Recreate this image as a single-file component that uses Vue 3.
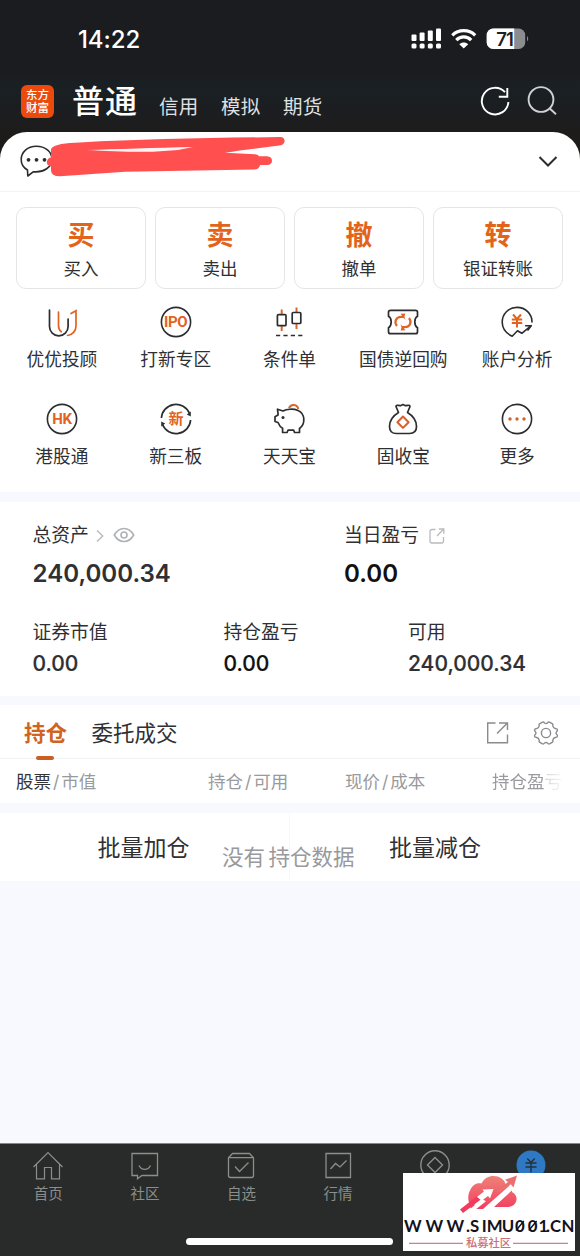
<script setup>
const accounts = ['信用', '模拟', '期货']
const trades = [
  { mark: '买', label: '买入' },
  { mark: '卖', label: '卖出' },
  { mark: '撤', label: '撤单' },
  { mark: '转', label: '银证转账' },
]
const services = [
  { icon: 'advisor', label: '优优投顾' },
  { icon: 'ring', mark: 'IPO', label: '打新专区' },
  { icon: 'candle', label: '条件单' },
  { icon: 'ticket', label: '国债逆回购' },
  { icon: 'analysis', label: '账户分析' },
  { icon: 'ring', mark: 'HK', label: '港股通' },
  { icon: 'newboard', mark: '新', label: '新三板' },
  { icon: 'pig', label: '天天宝' },
  { icon: 'bag', label: '固收宝' },
  { icon: 'more', label: '更多' },
]
const navs = [
  { icon: 'home', label: '首页' },
  { icon: 'community', label: '社区' },
  { icon: 'watch', label: '自选' },
  { icon: 'market', label: '行情' },
  { icon: 'wealth', label: '' },
  { icon: 'trade', label: '' },
]
</script>

<template>
  <div class="screen">
    <svg class="defs" width="0" height="0" aria-hidden="true">
      <symbol id="advisor" viewBox="0 0 36 36">
        <g fill="none" stroke-width="1.7" stroke-linecap="round">
          <path d="M14.500 8v13.500c0 3 1 5 2.800 6.200" stroke="#e2631f" />
          <path d="M5.500 6v16.500a9.300 9.300 0 0 0 18.600 0V15" stroke="#2c2d30" />
          <path d="M27 9.500 32 6.800V22c0 5-3.500 9-8.500 9.500" stroke="#e2631f" />
        </g>
      </symbol>
      <symbol id="ring" viewBox="0 0 36 36">
        <circle cx="18" cy="18" r="14.600" fill="none" stroke="#2c2d30" stroke-width="1.600" />
      </symbol>
      <symbol id="candle" viewBox="0 0 36 36">
        <g fill="none" stroke-width="1.700">
          <path d="M10.700 5.500v5m0 11v5.500M25.500 3.500v5m0 11v5.500" stroke="#d9662b" stroke-width="2" />
          <rect x="6.400" y="10.700" width="8.600" height="11" rx="1" stroke="#2c2d30" />
          <rect x="21.200" y="8.500" width="8.600" height="11" rx="1" stroke="#2c2d30" />
          <path d="M5 31.500h27" stroke="#2c2d30" stroke-dasharray="4.200 3.200" />
        </g>
      </symbol>
      <symbol id="ticket" viewBox="0 0 36 36">
        <path d="M5.500 6.300h25q2 0 2 2v4q-2.700 1.500-2.700 5.700t2.700 5.700v4q0 2-2 2h-25q-2 0-2-2v-4q2.700-1.500 2.700-5.700t-2.700-5.700v-4q0-2 2-2z" fill="none" stroke="#2c2d30" stroke-width="1.700" />
        <g fill="none" stroke="#df6429" stroke-width="2.200">
          <path d="M12 22c-3.500-4.500-.5-9.200 4-9.200h3" /><path d="M24 14c3.500 4.500.5 9.200-4 9.200h-3" />
        </g>
        <path d="m15.500 9.800 4.800-.3-.8 3.300 1 3.200zM20.500 26.200l-4.800.3.800-3.300-1-3.200z" fill="#df6429" />
      </symbol>
      <symbol id="analysis" viewBox="0 0 36 36">
        <path d="M33 18C33 9.700 26.500 3.400 18 3.400S3.200 10 3.200 18c0 6.200 4.300 11.500 10 14.200l5.300-5.500 4.300 2.600 9.400-7.600h-5.500m5.500 0-3.200 4.300" fill="none" stroke="#2c2d30" stroke-width="1.600" stroke-linejoin="round" stroke-linecap="round" />
        <path d="m14 10.500 4 4.500 4-4.500M12.800 15.500h10.400M12.800 19h10.400M18 15v8.500" fill="none" stroke="#e2631f" stroke-width="2" />
      </symbol>
      <symbol id="newboard" viewBox="0 0 36 36">
        <path d="M3.400 17A14.600 14.600 0 0 1 31.500 12.500M32.600 19A14.600 14.600 0 0 1 4.500 23.500" fill="none" stroke="#2c2d30" stroke-width="1.700" />
        <path d="m28.800 13.500 4-3v5zM7.200 22.500l-4 3v-5z" fill="#2c2d30" />
      </symbol>
      <symbol id="pig" viewBox="0 0 36 36">
        <path d="M18 7.200a4.800 4.800 0 0 1 9.300.8" fill="none" stroke="#d9662b" stroke-width="2" />
        <path d="M6.500 8.200 12 10c3.500-2 10.500-2.500 15-.5 7.500 3.400 7.500 13.500 1.500 18v4h-5l-.8-2.300H17l-.9 2.300h-4.500v-4.200C9 26 8 24 7 21.500l-3-1v-4.800l3-1.700c.3-2-.5-3.800-.5-5.800z" fill="none" stroke="#2c2d30" stroke-width="1.700" stroke-linejoin="round" />
        <circle cx="12" cy="16.500" r="1.500" fill="#2c2d30" />
      </symbol>
      <symbol id="bag" viewBox="0 0 36 36">
        <path d="M13.500 11.500 11 5.500q0-1.500 2-1.200l2.500.4L18 3.500l2.500 1.200 2.500-.4q2-.3 2 1.200l-2.500 6q9 5.500 9 14 0 7-7 7h-13q-7 0-7-7 0-8.500 9-14z" fill="none" stroke="#2c2d30" stroke-width="1.700" stroke-linejoin="round" />
        <path d="m18 15.500 5.600 5.700-5.600 5.700-5.600-5.700z" fill="none" stroke="#d9602b" stroke-width="2" stroke-linejoin="round" />
      </symbol>
      <symbol id="more" viewBox="0 0 36 36">
        <circle cx="18" cy="18" r="14.600" fill="none" stroke="#2c2d30" stroke-width="1.600" />
        <g fill="#c9662c"><circle cx="11" cy="18" r="1.700" /><circle cx="18" cy="18" r="1.700" /><circle cx="25" cy="18" r="1.700" /></g>
      </symbol>
      <symbol id="home" viewBox="0 0 32 32">
        <path d="M1.500 17 16 2.500 30.500 17M4.500 14.500v14.300h8V17.500h7v11.300h8V14.500" fill="none" stroke="#8b8e8c" stroke-width="1.200" />
      </symbol>
      <symbol id="community" viewBox="0 0 32 32">
        <path d="M3 3.500h25.500v22H13l-4.500 3.300v-3.300H3zM10 15.500c2.500 5.200 9 5.200 11.500 0" fill="none" stroke="#8b8e8c" stroke-width="1.300" />
      </symbol>
      <symbol id="watch" viewBox="0 0 32 32">
        <path d="M7.500 3.500h17l4 4.200v17.800q0 2-2 2h-21q-2 0-2-2V7.700zM3.500 7.700h25M10 16.500l4.500 5 9-9" fill="none" stroke="#8b8e8c" stroke-width="1.300" />
      </symbol>
      <symbol id="market" viewBox="0 0 32 32">
        <path d="M4 3.500h24.500v24H4zM8.500 19l5-5.500 4.500 3.500 6.500-6.500" fill="none" stroke="#8b8e8c" stroke-width="1.300" />
      </symbol>
      <symbol id="wealth" viewBox="0 0 32 32">
        <circle cx="16" cy="15" r="14.200" fill="none" stroke="#8b8e8c" stroke-width="1.400" />
        <path d="m16 7.500 7.500 7.500-7.500 7.500L8.500 15z" fill="none" stroke="#8b8e8c" stroke-width="1.400" />
      </symbol>
      <symbol id="trade" viewBox="0 0 32 32">
        <circle cx="16" cy="15" r="14.500" fill="#2f78c4" />
        <path d="m12.300 8.500 3.700 4 3.700-4M10.500 13h11M10.500 17h11M16 12.500v10" fill="none" stroke="#24303a" stroke-width="1.400" />
      </symbol>
    </svg>

    <header class="top">
      <div class="status">
        <time>14:22</time>
        <svg width="120" height="24" viewBox="0 0 120 24">
          <g fill="#fff">
            <rect x="1.500" y="7.500" width="5" height="6.500" rx="1" /><rect x="9.600" y="5.500" width="5" height="8.500" rx="1" /><rect x="17.800" y="3.500" width="5" height="10.500" rx="1" /><rect x="26" y="1.500" width="5" height="12.500" rx="1" />
            <rect x="1.500" y="16.500" width="5" height="5" rx="1.500" /><rect x="9.600" y="16.500" width="5" height="5" rx="1.500" /><rect x="17.800" y="16.500" width="5" height="5" rx="1.500" /><rect x="26" y="16.500" width="5" height="5" rx="1.500" />
            <path d="M49.300 17.200c2.500-2.300 6.400-2.300 8.900 0l-4.450 4.300z" />
          </g>
          <g fill="none" stroke="#fff" stroke-width="3.200"><path d="M42.300 8.300c6.300-6.200 16.600-6.200 22.900 0" /><path d="M46.300 13.100c4.100-4.200 10.800-4.200 14.900 0" /></g>
          <rect x="76.700" y="1.500" width="38.500" height="20.500" rx="6.500" fill="#8b8c8f" />
          <path d="M83.200 1.500h21V22h-21a6.500 6.500 0 0 1-6.500-6.500V8a6.500 6.500 0 0 1 6.500-6.500z" fill="#fff" />
          <path d="M117 9q2.500 2.700 0 5.500z" fill="#8b8c8f" />
          <text x="86.300" y="18.500" class="battery">71</text>
        </svg>
      </div>
      <nav class="accounts">
        <span class="logo">东方<br>财富</span>
        <strong>普通</strong>
        <span v-for="a in accounts" :key="a" class="account">{{ a }}</span>
        <svg class="tools" width="80" height="34" viewBox="0 0 80 34" fill="none" stroke-width="1.900">
          <path d="M28.400 18A13.300 13.300 0 1 1 25 8.200" stroke="#fff" /><path d="M27.300 4v8.700h-8.500" stroke="#fff" />
          <circle cx="61" cy="15.500" r="12.400" stroke="#cfd1d4" /><path d="m69.500 24.300 6.500 6" stroke="#cfd1d4" />
        </svg>
      </nav>
    </header>

    <main>
      <section class="profile">
        <svg width="270" height="48" viewBox="0 0 270 48">
          <path d="M7.500 37C3 34.500 1.200 30.500 1.200 26.500 1.200 19 7.500 13.200 16.300 13.200S32 18.500 32 26.200 24 39.800 13.500 38.700L7.800 43z" fill="#fff" stroke="#2d2d2f" stroke-width="1.600" stroke-linejoin="round" />
          <g fill="#2d2d2f"><circle cx="8.500" cy="26.800" r="1.900" /><circle cx="16.500" cy="26.800" r="1.900" /><circle cx="24.500" cy="26.800" r="1.900" /></g>
          <path d="M31 16C34 11 46 10 60 9.500 120 6 190 5 260 4c6-.3 6 7 1 8.200-20 2.800-40 5-56 7.500l30 1.500q3 0 4 2h8q5 .4 5 4.500t-5 4.200h-7q-1 4.500-6 4.500L105 38.700l-65 4.500q-9 0-9-6v-4q-5-1-4-5 .5-3 4-4z" fill="#ff4f4f" />
          <path d="M67 17c30-.8 67-2.300 106-3l-15 3-25 1.700c-20 .6-46-.7-66-1.700z" fill="#fff3f3" />
        </svg>
        <svg width="22" height="14" viewBox="0 0 22 14"><path d="m2.500 2 8.500 8.500L19.500 2" fill="none" stroke="#2d2d2f" stroke-width="2" /></svg>
      </section>

      <section class="trades">
        <button v-for="t in trades" :key="t.mark"><b>{{ t.mark }}</b><span>{{ t.label }}</span></button>
      </section>

      <section class="services">
        <div v-for="s in services" :key="s.label" class="service">
          <div class="icon">
            <svg width="36" height="36"><use :href="'#' + s.icon" /></svg>
            <b v-if="s.mark">{{ s.mark }}</b>
          </div>
          <span>{{ s.label }}</span>
        </div>
      </section>

      <section class="assets">
        <div class="row totals">
          <div>
            <p class="label">总资产
              <svg class="more-arrow" width="8" height="14" viewBox="0 0 8 14" fill="none" stroke="#b9babd" stroke-width="1.400"><path d="m1 1.500 5.700 5.500L1 12.500" /></svg>
              <svg class="eye" width="22" height="18" viewBox="0 0 22 18" fill="none" stroke="#b0b1b4" stroke-width="1.600"><path d="M1.300 9Q5 2.500 11 2.500T20.700 9Q17 15.500 11 15.500T1.300 9z" /><circle cx="11" cy="9" r="3" /></svg>
            </p>
            <p class="big">240,000.34</p>
          </div>
          <div>
            <p class="label">当日盈亏
              <svg class="share" width="16" height="16" viewBox="0 0 16 16" fill="none" stroke="#b9babd" stroke-width="1.300"><path d="M6.500 1.500H3q-2 0-2 2V13q0 2 2 2h9.500q2 0 2-2V9M10 1h4.800v4.800M14.500 1.300 8 8" /></svg>
            </p>
            <p class="big dark">0.00</p>
          </div>
        </div>
        <div class="row details">
          <div><p class="label">证券市值</p><p class="num">0.00</p></div>
          <div><p class="label">持仓盈亏</p><p class="num dark">0.00</p></div>
          <div><p class="label">可用</p><p class="num">240,000.34</p></div>
        </div>
      </section>

      <section class="positions">
        <div class="tabs">
          <span class="tab on">持仓</span><span class="tab">委托成交</span>
          <svg width="74" height="26" viewBox="0 0 74 26" fill="none" stroke="#8a8b8e" stroke-width="1.400">
            <path d="M10.500 3H2.700v19.800h19.800V14.500M14 3h8.500v7M22.200 3.300 12 13.500" />
            <circle cx="61" cy="13" r="4.600" />
            <path d="M57 2.300q1.700-.8 2.500.7 1.500 1 3 0 .8-1.500 2.500-.7l2.500 1.500q.8.800.3 2 .5 2.300 2.500 2.700 2.200.2 2.200 1.500 0 1-1 1.700-1 1.300 0 2.600 1 .7 1 1.700 0 1.300-2.200 1.500-2 .4-2.500 2.700.5 1.200-.3 2L65 23.700q-1.700.8-2.500-.7-1.500-1-3 0-.8 1.500-2.500.7l-2.500-1.500q-.8-.8-.3-2-.5-2.300-2.500-2.700-2.200-.2-2.200-1.500 0-1 1-1.700 1-1.300 0-2.600-1-.7-1-1.700 0-1.300 2.200-1.500 2-.4 2.500-2.700-.5-1.200.3-2z" />
          </svg>
        </div>
        <div class="heads">
          <span><em>股票</em><i>/</i>市值</span>
          <span>持仓<i>/</i>可用</span>
          <span>现价<i>/</i>成本</span>
          <span class="fade">持仓盈亏</span>
        </div>
      </section>

      <section class="batch">
        <span>批量加仓</span><span>批量减仓</span>
        <p class="empty"><span>没有</span>持仓数据</p>
      </section>
    </main>

    <footer class="bottom">
      <nav>
        <div v-for="n in navs" :key="n.icon"><svg width="32" height="32"><use :href="'#' + n.icon" /></svg><span>{{ n.label }}</span></div>
      </nav>
      <div class="indicator"></div>
    </footer>

    <aside class="stamp">
      <svg width="172" height="78" viewBox="0 0 172 78">
        <defs><linearGradient id="coral" gradientUnits="userSpaceOnUse" x1="0" y1="2" x2="0" y2="40"><stop offset="0" stop-color="#ee8579" /><stop offset="1" stop-color="#f4365c" /></linearGradient></defs>
        <path d="M73 36H68C65 29 64 22 67.500 16.500 70 11 75 9.500 78.500 10.500 82 3 89 2 95 3.500 99 5 102 8 102.500 11c5 1 7 4 6.500 8 4 2 5.500 6 4 9.500-1.200 4-5 5.500-9 5.500H86L83 36z" fill="url(#coral)" />
        <path d="M60 42 79 26l4 2.200L72 37zM80 36l29-25.500 3 4L91 34l-2 3h-9z" fill="#fff" />
        <path d="M102 6.800 114 2.500l-3.500 12-2.700-3.300L96 20l-1-3.500 10-7.500z" fill="#ea6f6e" />
        <path d="M70 27 81 18.500l-1.500-2 11-.5-3.500 9.500-2-2.500L72 33z" fill="#fff" />
        <path d="M57 36.500 73.500 23.500l4 3.200L60 40z" fill="#f23b5c" />
      </svg>
      <svg class="wordmark" width="172" height="78" viewBox="0 0 172 78">
        <text x="1 22.500 43.500 63 67 78.800 83.800 98.800 112 124.800 135.500 143 147 158.500" y="58.700" class="site">WWW.SIMU001.CN</text>
        <path d="m113 57.500 7.800-9.500M125.800 57.500l7.800-9.500" stroke="#11121e" stroke-width="1.400" />
        <path d="M6 70.300h54M110 70.300h55" stroke="#cf7f87" stroke-width="1.200" />
        <text x="85.500" y="74.300" text-anchor="middle" class="club">私募社区</text>
      </svg>
    </aside>
  </div>
</template>

<style>
body { margin: 0; }
</style>
<style scoped>
.screen { position: relative; width: 580px; height: 1256px; overflow: hidden; background: #f8f9fe; font-family: Inter, "Noto Sans CJK SC", sans-serif; color: #2f3033; }
.defs { position: absolute; }
p { margin: 0; }
svg { display: block; flex: none; }
.top { height: 164px; background: linear-gradient(#1b1c20 0 76px, #192024 84px, #1c1d1f 120px, #1d1c1b 132px); color: #fff; }
.status { height: 76px; box-sizing: border-box; padding: 27px 50px 0 78px; display: flex; justify-content: space-between; }
.status time { font-size: 24px; line-height: 25px; font-weight: 500; letter-spacing: -.1px; }
.battery { font: 600 18.500px Inter, sans-serif; letter-spacing: -1px; fill: #202125; }
.accounts { height: 50px; display: flex; align-items: center; padding-left: 21px; }
.logo { width: 33px; height: 33px; border-radius: 6px; background: #eb4a0c; margin-right: 18px; text-align: center; box-sizing: border-box; padding-top: 3px; font: 500 11.500px/13.500px "Noto Sans CJK SC", sans-serif; }
.accounts strong { font-size: 32px; line-height: 40px; letter-spacing: 1px; font-weight: 500; margin-right: 21px; padding-top: 1px; }
.account { font-size: 19.500px; line-height: 24px; width: 62px; padding-top: 11px; color: #dfe0e2; letter-spacing: .3px; }
.tools { margin-left: 135px; }
main { position: relative; margin-top: -32px; background: #fff; border-radius: 27px 27px 0 0; }
.profile { height: 59px; border-bottom: 1px solid #f3f3f5; padding: 0 21px 0 20px; display: flex; justify-content: space-between; align-items: center; }
.profile svg:first-child { margin-top: -9px; }
.trades { display: grid; grid-template-columns: repeat(4, 1fr); gap: 9px; padding: 15px 17px 0 16px; }
.trades button { height: 82px; box-sizing: border-box; border: 1.500px solid #e5e5e7; border-radius: 10px; background: #fff; padding: 8px 0 0; display: flex; flex-direction: column; align-items: center; justify-content: flex-start; font-family: inherit; color: inherit; }
.trades b { font-size: 27px; line-height: 39px; font-weight: 700; color: #e2641b; }
.trades span { font-size: 17.500px; line-height: 28px; }
.services { height: 203px; box-sizing: border-box; display: grid; grid-template-columns: repeat(5, 1fr); grid-auto-rows: 97px; padding: 15px 6px 0 5px; }
.service { display: flex; flex-direction: column; align-items: center; }
.icon { position: relative; width: 36px; height: 36px; }
.icon b { position: absolute; inset: 0; text-align: center; font: 700 15px/36px Roboto, "Noto Sans CJK SC", sans-serif; letter-spacing: -.4px; color: #e2631f; }
.service span { font-size: 17.700px; line-height: 24px; margin-top: 8px; white-space: nowrap; }
.assets { height: 194px; border-top: 10px solid #f8f9fe; border-bottom: 9px solid #f8f9fe; padding-left: 32.500px; }
.row { display: grid; }
.totals { grid-template-columns: 311.500px 1fr; padding-top: 22px; }
.details { grid-template-columns: 191px 184.500px 1fr; padding-top: 32px; }
.label { height: 24px; display: flex; align-items: center; font-size: 18.800px; line-height: 24px; }
.more-arrow { margin-left: 7px; }
.eye { margin-left: 9px; margin-top: -2px; }
.share { margin-left: 10px; margin-top: -1px; }
.big { font-size: 24.100px; line-height: 30px; font-weight: 600; margin-top: 11px; }
.num { font-size: 21px; line-height: 28px; font-weight: 500; margin-top: 4.500px; -webkit-text-stroke: .2px; }
.dark { color: #111; }
.positions { border-bottom: 10px solid #f8f9fe; }
.tabs { height: 54px; border-bottom: 1px solid #f2f2f4; display: flex; align-items: center; padding: 2px 21px 0 24px; box-sizing: border-box; }
.tab { position: relative; font-size: 21.500px; line-height: 52px; margin-right: 24.500px; }
.on { font-weight: 700; color: #d0641e; }
.on::after { content: ""; position: absolute; left: 12px; bottom: -1px; width: 18px; height: 4px; border-radius: 2px; background: #c95f24; }
.tabs svg { margin-left: auto; }
.heads { height: 44px; display: grid; grid-template-columns: 192px 137px 147px 74px; padding-left: 16px; font-size: 17.500px; line-height: 46px; color: #999a9d; white-space: nowrap; }
.heads em { font-style: normal; color: #333437; }
.heads i { font-style: normal; margin: 0 2px; }
.fade { overflow: hidden; mask-image: linear-gradient(90deg, #000 51px, rgba(0,0,0,.4) 54px, transparent 74px); }
.batch { position: relative; height: 68px; display: grid; grid-template-columns: 290px 290px; font-size: 23px; line-height: 71px; text-align: center; color: #303033; }
.batch > span { height: 68px; }
.batch > span:first-child { padding-right: 2px; border-right: 1px solid #f8f8fb; box-sizing: border-box; }
.empty { position: absolute; left: 222px; top: 30px; width: 134px; text-align: left; font-size: 21.500px; line-height: 28px; color: #98999c; white-space: nowrap; }
.empty span { margin-right: 3.500px; }
.bottom { position: absolute; left: 0; bottom: 0; width: 580px; height: 113px; background: #282b29; border-top: 1px solid #858789; box-sizing: border-box; }
.bottom nav { display: grid; grid-template-columns: repeat(6, 96.600px); padding-top: 6px; }
.bottom nav div { display: flex; flex-direction: column; align-items: center; font-size: 14.500px; line-height: 20px; color: #8b8e8c; }
.bottom nav span { margin-top: 2px; }
.indicator { width: 207px; height: 7px; border-radius: 4px; background: #fff; margin: 34px 0 0 186px; }
.stamp { position: absolute; left: 403px; top: 1173px; width: 172px; height: 78px; background: #fff; }
.wordmark { position: absolute; inset: 0; }
.site { font: 700 16.800px Lato, sans-serif; fill: #11121e; }
.club { font: 500 11.300px "Noto Sans CJK SC", sans-serif; fill: #cc6f79; }
</style>
